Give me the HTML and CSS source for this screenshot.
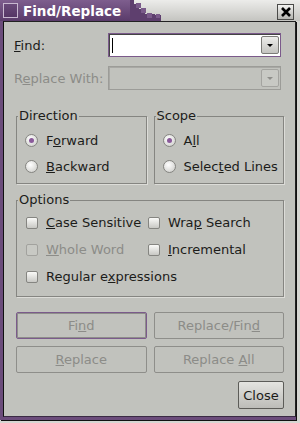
FILE: index.html
```html
<!DOCTYPE html>
<html lang="en">
<head>
    <meta charset="UTF-8">
    <title>Find/Replace</title>
    <link rel="stylesheet" href="styles.css">
</head>
<body>
    <div class="window">
        <div class="titlebar">
            <div class="title-left">
                <span class="app-icon"></span>
                <span class="title">Find/Replace</span>
            </div>
            <svg class="steps" width="36" height="21" viewBox="0 0 36 21">
                <rect x="0" y="0" width="4" height="21" fill="#5e3f6e"/>
                <rect x="4" y="4" width="5" height="17" fill="#5e3f6e"/>
                <rect x="6" y="3" width="5" height="5" fill="#7a5a8a"/>
                <rect x="9" y="9" width="6" height="12" fill="#5e3f6e"/>
                <rect x="11" y="8" width="5" height="5" fill="#7a5a8a"/>
                <rect x="15" y="14" width="10" height="7" fill="#5e3f6e"/>
                <rect x="17" y="13" width="5" height="5" fill="#7a5a8a"/>
                <rect x="25" y="15" width="6" height="6" fill="#5e3f6e"/>
                <rect x="26" y="14" width="4" height="4" fill="#7a5a8a"/>
            </svg>
            <span class="spacer"></span>
            <span class="close-box">
                <svg width="12" height="12" viewBox="0 0 12 12">
                    <path d="M2 2 L10 10 M10 2 L2 10" stroke="#000" stroke-width="2.6"/>
                </svg>
            </span>
        </div>

        <div class="frame">
            <div class="client">
                <div class="field-row">
                    <label class="field-label"><u>F</u>ind:</label>
                    <div class="combo focused">
                        <span class="caret"></span>
                        <span class="combo-btn">
                            <svg width="8" height="5" viewBox="0 0 8 5"><path d="M1 1 L7 1 L4 4 Z" fill="#000"/></svg>
                        </span>
                    </div>
                </div>
                <div class="field-row">
                    <label class="field-label disabled">R<u>e</u>place With:</label>
                    <div class="combo off">
                        <span class="combo-btn">
                            <svg width="8" height="5" viewBox="0 0 8 5"><path d="M1 1 L7 1 L4 4 Z" fill="#8e8e8a"/></svg>
                        </span>
                    </div>
                </div>

                <div class="pair">
                    <fieldset class="group">
                        <legend>Direction</legend>
                        <div class="opt"><span class="radio checked"></span><span>F<u>o</u>rward</span></div>
                        <div class="opt"><span class="radio"></span><span><u>B</u>ackward</span></div>
                    </fieldset>
                    <fieldset class="group">
                        <legend>Scope</legend>
                        <div class="opt"><span class="radio checked"></span><span>A<u>l</u>l</span></div>
                        <div class="opt"><span class="radio"></span><span>Selec<u>t</u>ed Lines</span></div>
                    </fieldset>
                </div>

                <fieldset class="group options">
                    <legend>Options</legend>
                    <div class="opt-grid">
                        <div class="opt"><span class="check"></span><span><u>C</u>ase Sensitive</span></div>
                        <div class="opt"><span class="check"></span><span>Wra<u>p</u> Search</span></div>
                        <div class="opt disabled"><span class="check"></span><span><u>W</u>hole Word</span></div>
                        <div class="opt"><span class="check"></span><span><u>I</u>ncremental</span></div>
                        <div class="opt wide"><span class="check"></span><span>Regular e<u>x</u>pressions</span></div>
                    </div>
                </fieldset>

                <div class="buttons">
                    <span class="btn off focused"><span>Fi<u>n</u>d</span></span>
                    <span class="btn off"><span>Replace/Fin<u>d</u></span></span>
                    <span class="btn off"><span><u>R</u>eplace</span></span>
                    <span class="btn off"><span>Replace <u>A</u>ll</span></span>
                </div>

                <div class="footer">
                    <span class="btn close">Close</span>
                </div>
            </div>
        </div>
    </div>
</body>
</html>
```

FILE: styles.css
```css
body {
    margin: 0;
    font-family: "DejaVu Sans", sans-serif;
    font-size: 13px;
    color: #1c1c1a;
}
.window {
    width: 300px;
    height: 423px;
    display: flex;
    flex-direction: column;
    background: #d6d6d2;
    overflow: hidden;
}
.titlebar {
    height: 21px;
    display: flex;
    align-items: stretch;
    background: linear-gradient(#ececea, #c4c4c0);
}
.title-left {
    width: 130px;
    display: flex;
    align-items: center;
    background: linear-gradient(#7e5e8e, #5a3b6a);
}
.app-icon {
    width: 13px;
    height: 13px;
    margin: 0 5px 0 3px;
    border: 1px solid #c8b8d0;
    background: linear-gradient(#6a4a7a, #553665);
}
.title {
    color: #fff;
    font-weight: bold;
    font-size: 13.5px;
}
.steps {
    display: block;
}
.spacer {
    flex: 1;
}
.close-box {
    width: 15px;
    height: 14px;
    margin: 4px 6px 0 0;
    border: 1px solid #4a4a48;
    background: linear-gradient(#f2f2f0, #b4b4b0);
    display: flex;
    align-items: center;
    justify-content: center;
}
.frame {
    flex: 1;
    display: flex;
    border-left: 3px solid #6b4c7b;
    border-bottom: 3px solid #6b4c7b;
    margin-bottom: 3px;
    margin-right: 4px;
    box-shadow: 1px 1px 0 #111;
}
.client {
    flex: 1;
    background: #c1c2bd;
    border-left: 1px solid #111;
    border-top: 1px solid #222;
    border-right: 1px solid #222;
    border-bottom: 1px solid #3a2a44;
    padding: 11px 11px 0 12px;
}
.field-row {
    display: flex;
    align-items: center;
    margin-bottom: 9px;
}
.field-label {
    width: 94px;
    margin-left: -2px;
}
.disabled {
    color: #8c8c88;
}
.combo {
    width: 170px;
    height: 22px;
    display: flex;
    align-items: center;
    justify-content: space-between;
    border: 1px solid #888884;
    background: #fff;
    padding-right: 1px;
}
.combo.focused {
    border-color: #7b5a8b;
    box-shadow: inset 1px 1px 0 #444;
}
.combo.off {
    background: #c1c2bd;
    border-color: #9c9c98;
    box-shadow: inset 1px 1px 0 #a8a8a4;
    justify-content: flex-end;
}
.caret {
    width: 1px;
    height: 15px;
    margin-left: 3px;
    background: #000;
}
.combo-btn {
    width: 16px;
    height: 16px;
    border: 1px solid #7c7c78;
    border-radius: 2px;
    background: linear-gradient(#ececea, #c4c4c0);
    display: flex;
    align-items: center;
    justify-content: center;
}
.combo.off .combo-btn {
    border-color: #a4a4a0;
    background: #c8c9c4;
}
.pair {
    display: flex;
    gap: 7px;
    margin-top: 19px;
}
.group {
    margin: 0;
    padding: 4px 0 4px 8px;
    border: 1px solid #858581;
    box-shadow: 1px 1px 0 #dcdcd8;
}
.pair .group {
    flex: 1;
}
.group legend {
    padding: 0 1px;
    margin-left: -7px;
    line-height: 14px;
}
.opt {
    display: flex;
    align-items: center;
    height: 26px;
    white-space: nowrap;
}
.radio {
    width: 11px;
    height: 11px;
    margin-right: 8px;
    border: 1px solid #858581;
    border-radius: 50%;
    background: radial-gradient(circle at 40% 35%, #fff, #c8c8c4);
    display: flex;
    align-items: center;
    justify-content: center;
}
.radio.checked::after {
    content: "";
    width: 5px;
    height: 5px;
    border-radius: 50%;
    background: #8a5a9a;
}
.options {
    margin-top: 9px;
    padding: 2px 0 6px 9px;
}
.options legend {
    margin-left: -8px;
}
.opt-grid {
    display: grid;
    grid-template-columns: 122px 1fr;
}
.opt-grid .opt {
    height: 27px;
}
.opt-grid .wide {
    grid-column: span 2;
}
.check {
    width: 10px;
    height: 10px;
    margin-right: 8px;
    border: 1px solid #858581;
    border-radius: 2px;
    background: linear-gradient(#fafaf8, #c8c8c4);
}
.opt.disabled .check {
    border-color: #a2a29e;
    background: #c8c9c4;
}
.buttons {
    display: grid;
    grid-template-columns: 1fr 1fr;
    gap: 7px 7px;
    margin-top: 15px;
}
.btn {
    height: 25px;
    display: flex;
    align-items: center;
    justify-content: center;
    border: 1px solid #8e8e8a;
    border-radius: 2px;
}
.btn.off {
    color: #8c8c88;
}
.btn.focused {
    border-color: #7b5a8b;
    box-shadow: inset 0 0 0 1px #8e8e8a;
}
.footer {
    display: flex;
    justify-content: flex-end;
    margin-top: 8px;
}
.btn.close {
    width: 44px;
    height: 26px;
    border-color: #5c5c58;
    background: linear-gradient(#e4e4e0, #bcbcb8);
}
```
